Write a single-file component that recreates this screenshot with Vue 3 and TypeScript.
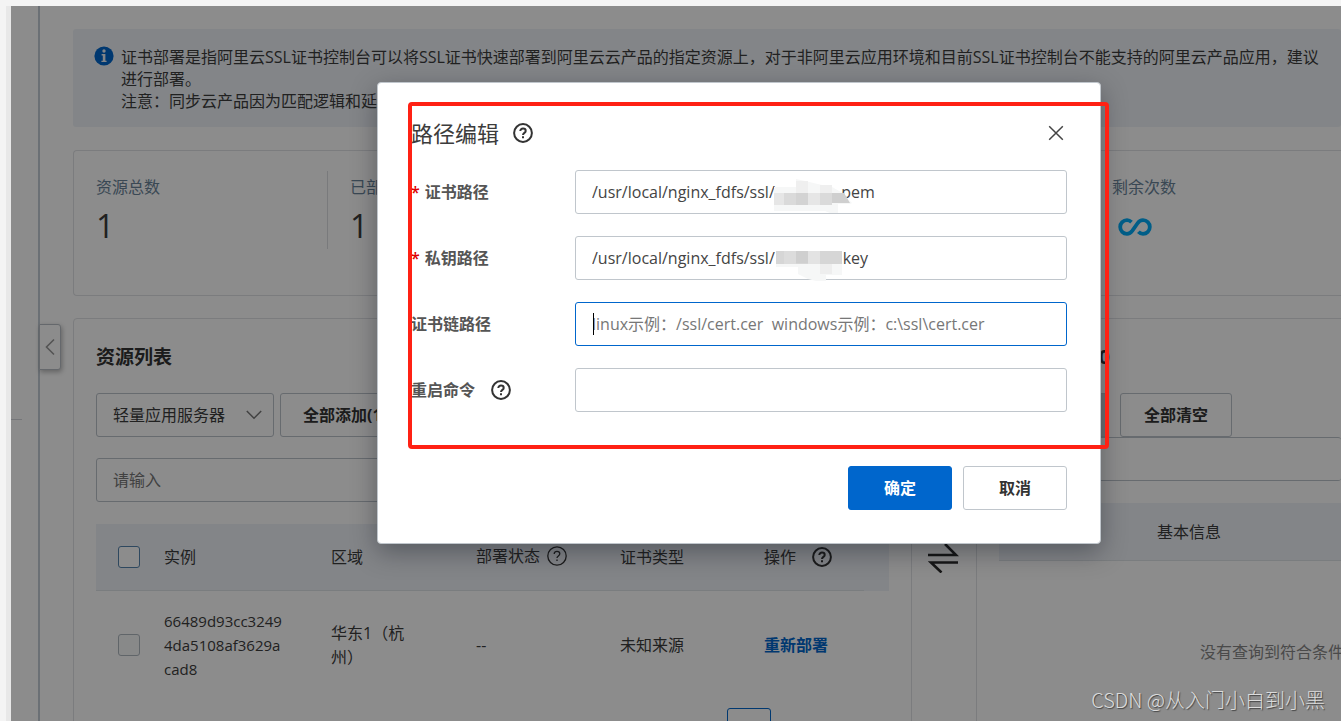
<script setup lang="ts">
import { ref } from 'vue'

const nbsp = '\u00a0'
const certPath = ref('/usr/local/nginx_fdfs/ssl/' + nbsp.repeat(15) + '.pem')
const keyPath = ref('/usr/local/nginx_fdfs/ssl/' + nbsp.repeat(13) + 'o.key')
const chainPath = ref('')
const restartCommand = ref('')
const chainHint = 'linux示例：/ssl/cert.cer' + nbsp.repeat(2) + 'windows示例：c:\\ssl\\cert.cer'
const keyword = ref('')
const product = ref('swas')
</script>

<template>
  <div class="window">
    <div class="app">
      <aside class="side"><div class="side-line"></div></aside>
      <main class="content">
        <button class="collapse" type="button" aria-label="收起">
          <svg width="12" height="18" viewBox="0 0 12 18"><path d="M10 1.5 2.5 9l7.5 7.5" fill="none" stroke="#999" stroke-width="1.6" /></svg>
        </button>

        <section class="notice">
          <svg class="notice-icon" width="20" height="20" viewBox="0 0 20 20">
            <circle cx="10" cy="10" r="9.6" fill="#0066cc" />
            <circle cx="10" cy="5" r="1.7" fill="#eff3f8" />
            <path d="M7.6 8.1h3.8v6.6h1.2v1.4H7.4v-1.4h1.4V9.5H7.6z" fill="#eff3f8" />
          </svg>
          <p>
            证书部署是指阿里云SSL证书控制台可以将SSL证书快速部署到阿里云云产品的指定资源上，对于非阿里云应用环境和目前SSL证书控制台不能支持的阿里云产品应用，建议<br />进行部署。<br />注意：同步云产品因为匹配逻辑和延
          </p>
        </section>

        <section class="stats">
          <div class="stat"><span class="stat-label">资源总数</span><span class="stat-value">1</span></div>
          <div class="stat"><span class="stat-label">已部署</span><span class="stat-value">1</span></div>
          <div class="stat"></div>
          <div class="stat"></div>
          <div class="stat">
            <span class="stat-label">剩余次数</span>
            <svg class="infinity" width="34" height="18" viewBox="0 0 34 18">
              <path d="M13.5 4.2C12.2 2.9 10.6 2.2 9 2.2a6.8 6.8 0 0 0 0 13.6c2.4 0 4-1.2 5.4-3.1l5-7.2c1.4-2 3.100-3.300 5.600-3.300a6.800 6.800 0 0 1 0 13.600c-1.800 0-3.400-.7-4.600-2" fill="none" stroke="#00abf8" stroke-width="3.800" />
            </svg>
          </div>
        </section>

        <div class="transfer">
          <section class="panel">
            <h2>资源列表</h2>
            <div class="toolbar">
              <div class="select">
                <select v-model="product" aria-label="产品"><option value="swas">轻量应用服务器</option></select>
                <svg width="16" height="10" viewBox="0 0 16 10"><path d="m.8 1 7.200 7.200L15.200 1" fill="none" stroke="#777" stroke-width="1.500" /></svg>
              </div>
              <button class="plain" type="button">全部添加(1)</button>
            </div>
            <input v-model="keyword" class="search" type="text" placeholder="请输入" aria-label="搜索" />
            <table>
              <colgroup>
                <col class="c-check" /><col class="c-name" /><col class="c-zone" /><col class="c-mid" /><col class="c-mid" /><col class="c-act" /><col />
              </colgroup>
              <thead>
                <tr>
                  <th class="pick"><input type="checkbox" aria-label="全选" /></th>
                  <th>实例</th>
                  <th>区域</th>
                  <th class="raised">
                    <span class="head">部署状态
                      <svg class="thin" width="20" height="20" viewBox="0 0 20 20"><circle cx="10" cy="10" r="9.200" /><path d="M7.200 8c0-1.600 1.200-2.700 2.800-2.700s2.800 1 2.800 2.500c0 2-2.800 2.200-2.800 4.200" /><path d="M10 13.400v1.600" /></svg>
                    </span>
                  </th>
                  <th>证书类型</th>
                  <th>
                    <span class="head wide">操作
                      <svg class="bold" width="20" height="20" viewBox="0 0 20 20"><circle cx="10" cy="10" r="8.900" /><path d="M7.300 8.100c0-1.600 1.200-2.500 2.700-2.500s2.700.9 2.700 2.300c0 1.900-2.700 2-2.700 4" /><path d="M10 13.200v2" /></svg>
                    </span>
                  </th>
                  <th class="gutter"></th>
                </tr>
              </thead>
              <tbody>
                <tr>
                  <td class="pick"><input class="off" type="checkbox" disabled aria-label="选择实例" /></td>
                  <td class="id">66489d93cc32494da5108af3629acad8</td>
                  <td class="zone">华东1（杭州）</td>
                  <td>--</td>
                  <td>未知来源</td>
                  <td><a href="#">重新部署</a></td>
                  <td></td>
                </tr>
              </tbody>
            </table>
            <div class="pager"><button type="button" aria-label="第一页"></button></div>
          </section>

          <div class="swap">
            <svg width="32" height="30" viewBox="0 0 32 30"><path d="M1 12h28L18 1M31 19.500H4l10.500 10" fill="none" stroke="#2b2b2b" stroke-width="2.600" /></svg>
          </div>

          <section class="panel target">
            <h2>已选择资源 0</h2>
            <div class="toolbar">
              <button class="muted" type="button" disabled>移除</button>
              <button class="plain clear" type="button">全部清空</button>
            </div>
            <input class="search" type="text" aria-label="搜索已选资源" />
            <div class="target-head">基本信息</div>
            <p class="empty">没有查询到符合条件</p>
          </section>
        </div>
      </main>

      <div class="mask"></div>
    </div>

    <div class="dialog" role="dialog" aria-labelledby="dialog-title">
      <header>
        <h1 id="dialog-title">路径编辑</h1>
        <svg class="bold" width="20" height="20" viewBox="0 0 20 20"><circle cx="10" cy="10" r="8.900" /><path d="M7.300 8.100c0-1.600 1.200-2.500 2.700-2.500s2.700.9 2.700 2.300c0 1.900-2.700 2-2.700 4" /><path d="M10 13.200v2" /></svg>
        <button class="close" type="button" aria-label="关闭">
          <svg width="16" height="16" viewBox="0 0 16 16"><path d="m1.200 1.200 13.600 13.600M14.800 1.200 1.200 14.800" fill="none" stroke="#444" stroke-width="1.500" /></svg>
        </button>
      </header>
      <form @submit.prevent>
        <label for="cert"><i>*</i>证书路径</label>
        <div class="field">
          <input id="cert" v-model="certPath" type="text" />
          <svg class="mosaic" width="78" height="36" viewBox="0 0 78 36">
            <path d="M0 8h22V0l9 2 17 4 10 2 9 5 11 11-2 1H64v9h-8l-5-2H0z" fill="#f6f7f7" />
            <path d="M22 2h12v12H22zM46 6h12v8H46z" fill="#efefef" />
            <path d="M0 14h10v12H0zM34 14h12v12H34z" fill="#e6e6e6" />
            <path d="M10 14h12v12H10zM46 14h12v12H46z" fill="#dadada" />
            <path d="M22 14h12v12H22z" fill="#d3d3d3" /><path d="M58 14h12l6 10H58z" fill="#cfcfcf" />
          </svg>
        </div>
        <label for="key"><i>*</i>私钥路径</label>
        <div class="field">
          <input id="key" v-model="keyPath" type="text" />
          <svg class="mosaic" width="78" height="36" viewBox="0 0 78 36">
            <path d="M2 6h66v24H52v6H42l-8-2-10-5v-7H2z" fill="#f6f7f7" />
            <path d="M2 6h8v13H2zM22 6h12v13H22zM46 6h22v13H46z" fill="#d6d6d6" />
            <path d="M10 6h12v13H10z" fill="#dcdcdc" /><path d="M22 6h12v12H22z" fill="#cfcfcf" /><path d="M34 6h12v13H34z" fill="#e3e3e3" />
            <path d="M46 19h12v10H46z" fill="#eee" />
          </svg>
        </div>
        <label for="chain">证书链路径</label>
        <div class="field">
          <input id="chain" v-model="chainPath" class="active" type="text" :placeholder="chainHint" />
          <span class="caret"></span>
        </div>
        <label for="restart">重启命令
          <svg class="bold" width="20" height="20" viewBox="0 0 20 20"><circle cx="10" cy="10" r="8.900" /><path d="M7.300 8.100c0-1.600 1.200-2.500 2.700-2.500s2.700.9 2.700 2.300c0 1.900-2.700 2-2.700 4" /><path d="M10 13.200v2" /></svg>
        </label>
        <div class="field"><input id="restart" v-model="restartCommand" type="text" /></div>
      </form>
      <footer>
        <button class="primary" type="button">确定</button>
        <button class="cancel" type="button">取消</button>
      </footer>
      <div class="marker"></div>
    </div>

    <div class="watermark">CSDN @从入门小白到小黑</div>
  </div>
</template>

<style>
html,
body {
  background: #f4f4f4;
  overflow: hidden;
}
</style>

<style scoped>
* {
  box-sizing: border-box;
}
.window {
  position: relative;
  height: 100vh;
  padding: 6px 0 0 6px;
  overflow: hidden;
  color: #3c3c3c;
  font: 16px/24px "Open Sans", "Noto Sans CJK SC", sans-serif;
}
input,
select,
button {
  font: inherit;
  color: inherit;
}
h1,
h2,
p {
  margin: 0;
}
.app {
  position: relative;
  display: flex;
  height: 100%;
  border-left: 5px solid #e8e8e8;
  background: #fff;
  overflow: hidden;
}
.mask {
  position: absolute;
  inset: 0;
  background: rgba(0, 0, 0, 0.45);
}
.side {
  flex: 0 0 27px;
}
.side-line {
  width: 11px;
  height: 414px;
  border-bottom: 1px solid #d5d8dc;
}
.content {
  position: relative;
  flex: 1;
  min-width: 0;
  padding: 23px 0 0 33px;
  border-left: 2px solid #c4cdd6;
}
.collapse {
  position: absolute;
  left: -1px;
  top: 318px;
  width: 22px;
  height: 46px;
  padding: 0;
  border: 1px solid #b8bec5;
  border-radius: 0 3px 3px 0;
  background: #fff;
  box-shadow: 1px 2px 5px rgba(0, 0, 0, 0.3);
}
.collapse svg {
  display: block;
  margin: auto;
}
.notice {
  display: flex;
  gap: 7px;
  padding: 17px 0 15px 21px;
  border-radius: 3px;
  background: #eff3f8;
  line-height: 22px;
  white-space: nowrap;
  overflow: hidden;
}
.notice-icon {
  flex: none;
}
.stats {
  display: grid;
  grid-template-columns: repeat(5, minmax(254px, 1fr));
  height: 146px;
  margin-top: 23px;
  padding: 20px 0 0 22px;
  border: 1px solid #e0e2e5;
  border-right: 0;
  border-radius: 4px 0 0 4px;
}
.stat {
  display: flex;
  flex-direction: column;
  gap: 11px;
  height: 78px;
  padding-top: 5px;
}
.stat:first-child {
  width: 232px;
  border-right: 1px solid #dddfe2;
}
.stat-label {
  line-height: 22px;
  color: #6a8499;
}
.stat-value {
  font-size: 32px;
  line-height: 34px;
}
.infinity {
  margin: 9px 0 0 6px;
}
.transfer {
  display: grid;
  grid-template-columns: 839px 64px minmax(365px, 1fr);
  height: 520px;
  margin-top: 22px;
}
.panel {
  min-width: 0;
  padding: 23px 22px 0;
  border: 1px solid #e0e2e5;
  border-radius: 4px;
}
.panel h2 {
  color: #333;
  font-size: 19px;
  line-height: 30px;
  font-weight: 700;
}
.toolbar {
  display: flex;
  gap: 6px;
  margin-top: 21px;
}
.select {
  position: relative;
}
.select svg {
  position: absolute;
  right: 12px;
  top: 17px;
}
select,
.plain,
.search,
.muted {
  display: block;
  height: 44px;
  border: 1px solid #bcc3ca;
  border-radius: 3px;
  background: #fff;
}
select {
  width: 178px;
  padding: 0 16px;
  appearance: none;
}
.plain {
  padding: 0 22px;
  color: #333;
  font-weight: 700;
}
.plain.clear {
  padding: 0 23px;
}
.search {
  width: 100%;
  margin-top: 21px;
  padding: 0 16px;
}
::placeholder {
  color: #777;
  opacity: 1;
}
table {
  width: 793px;
  margin-top: 22px;
  border-collapse: collapse;
  table-layout: fixed;
}
.c-check {
  width: 46px;
}
.c-name {
  width: 167px;
}
.c-zone {
  width: 145px;
}
.c-mid {
  width: 144px;
}
.c-act {
  width: 122px;
}
th {
  height: 66px;
  padding: 0 0 0 22px;
  border-bottom: 1px solid #dfe3e8;
  background: #eff3f8;
  font-weight: 400;
  text-align: left;
  white-space: nowrap;
}
th.gutter {
  border-color: #eff3f8;
}
th.raised {
  padding-bottom: 2px;
}
.head {
  display: flex;
  align-items: center;
  gap: 7px;
}
.head.wide {
  gap: 16px;
}
td {
  height: 109px;
  padding: 0 0 0 22px;
}
td.id {
  padding-right: 22px;
  font-size: 15px;
  word-break: break-all;
}
td.zone {
  padding-right: 44px;
}
.pick input {
  display: block;
  width: 22px;
  height: 22px;
  margin: 0;
  border: 1px solid #5584ad;
  border-radius: 3px;
  background: #fff;
  appearance: none;
}
.pick input.off {
  border-color: #b0b8c0;
  background: #f7f9fa;
}
a {
  color: #0066cc;
  font-weight: 700;
  text-decoration: none;
}
.pager {
  display: flex;
  justify-content: flex-end;
  margin-top: 9px;
  padding-right: 118px;
}
.pager button {
  width: 44px;
  height: 44px;
  border: 1px solid #0066cc;
  border-radius: 3px;
  background: #fff;
}
.swap {
  padding: 225px 0 0 15px;
}
.target {
  padding-right: 0;
  border-right: 0;
  border-radius: 4px 0 0 4px;
}
.target .toolbar {
  gap: 11px;
}
.target .search {
  margin-top: 0;
  border-right: 0;
}
.muted {
  width: 110px;
  background: #c9ced4;
}
.target-head {
  height: 58px;
  margin-top: 22px;
  padding-left: 158px;
  border-bottom: 1px solid #dfe3e8;
  background: #eff3f8;
  line-height: 58px;
}
.empty {
  margin-top: 79px;
  padding-left: 201px;
  color: #888;
  white-space: nowrap;
}
.thin,
.bold {
  flex: none;
  fill: none;
  stroke: #333;
}
.thin {
  stroke-width: 1.3;
}
.bold {
  stroke-width: 2;
}
.dialog {
  position: absolute;
  left: 377px;
  top: 82px;
  width: 724px;
  padding: 34px 33px 33px;
  border: 1px solid #c0c6cc;
  border-radius: 4px;
  background: #fff;
  box-shadow: 0 8px 26px rgba(0, 10, 20, 0.35);
}
.dialog header {
  display: flex;
  align-items: center;
  gap: 14px;
  height: 32px;
}
h1 {
  font-size: 22px;
  line-height: 32px;
  font-weight: 400;
}
.close {
  display: flex;
  margin-left: auto;
  padding: 3px;
  border: 0;
  background: none;
}
form {
  display: grid;
  grid-template-columns: 164px 1fr;
  gap: 22px 0;
  align-items: center;
  margin-top: 21px;
}
label {
  display: flex;
  align-items: center;
  gap: 16px;
  color: #555;
  font-weight: 700;
}
label:has(i) {
  gap: 5px;
}
label i {
  color: #d00;
  font-style: normal;
  font-weight: 600;
}
.field {
  position: relative;
}
.field input {
  display: block;
  width: 100%;
  height: 44px;
  padding: 0 16px;
  border: 1px solid #c0c6cc;
  border-radius: 3px;
  outline: 0;
  background: #fff;
  color: #444;
}
.field input.active {
  border-color: #0066cc;
}
.caret {
  position: absolute;
  left: 18px;
  top: 11px;
  width: 1px;
  height: 22px;
  background: #000;
}
.mosaic {
  position: absolute;
  left: 199px;
  top: 9px;
}
footer {
  display: flex;
  justify-content: flex-end;
  gap: 11px;
  margin-top: 54px;
}
footer button {
  width: 104px;
  height: 44px;
  border: 1px solid #c0c6cc;
  border-radius: 3px;
  background: #fff;
  color: #333;
  font-weight: 700;
}
footer .primary {
  border-color: #0066cc;
  background: #0066cc;
  color: #fff;
}
.marker {
  position: absolute;
  left: 30px;
  top: 19px;
  width: 701px;
  height: 347px;
  border: 4px solid #ff2114;
  border-radius: 4px;
  pointer-events: none;
}
.watermark {
  position: absolute;
  right: 16px;
  bottom: 6px;
  color: #dcdcdc;
  font: 20px/30px "Noto Sans CJK SC", sans-serif;
  font-weight: 300;
  text-shadow: 1px 1px 1px #444;
}
</style>
